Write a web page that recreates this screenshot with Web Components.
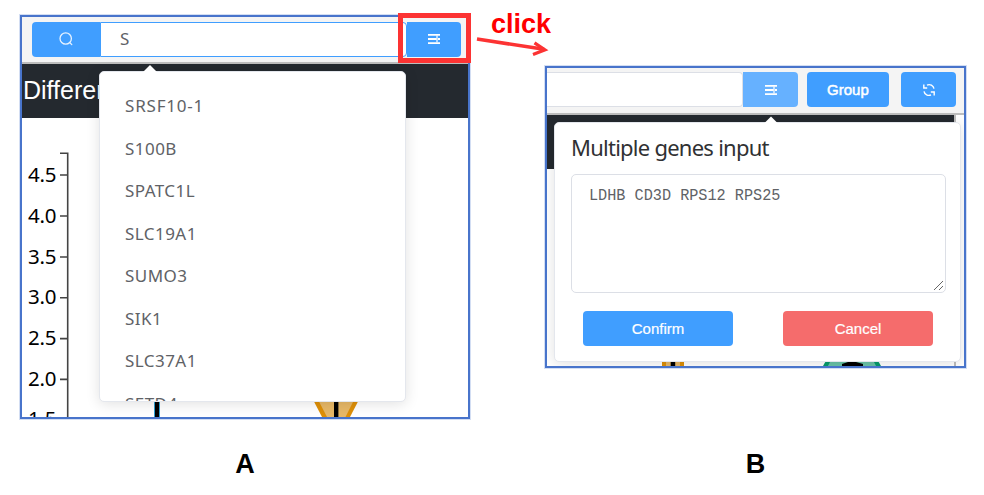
<!DOCTYPE html>
<html lang="en"><head><meta charset="utf-8"><title>Gene search</title>
<style>
html,body{margin:0;background:#fff;width:984px;height:495px;overflow:hidden;font-family:"Liberation Sans",Arial,sans-serif}
</style></head><body><gene-figure></gene-figure>
<script>
function define(name, markup){
  const t=document.createElement('template'); t.innerHTML=markup;
  customElements.define(name,class extends HTMLElement{
    constructor(){super();this.attachShadow({mode:'open'}).append(t.content.cloneNode(true));}
  });
}
define('ui-button',`<style>
:host{display:flex;align-items:center;justify-content:center;box-sizing:border-box;width:54.5px;height:35px;flex:none;background:var(--c,#409eff);border-radius:var(--r,4px);color:#fff;font:15px "Liberation Sans",Arial,sans-serif;-webkit-text-stroke:var(--s,.3px) #fff}
</style><slot></slot>`);
define('icon-search',`<style>:host{display:block;width:16px;height:16px}svg{display:block}</style>
<svg width="16" height="16" fill="none" stroke="#e6f2ff" stroke-width="1.3" stroke-linecap="round"><circle cx="7.7" cy="7.5" r="5.7"/><path d="M11.7 11.5l2.1 2.1"/></svg>`);
define('icon-options',`<style>:host{display:block;width:14px;height:12px}svg{display:block}</style>
<svg width="14" height="12" fill="#fff"><path d="M1 1h12v1.7H1zM1 5h8.6v1.9H1zM11 5h2v1.9h-2zM1 9.200h12v1.900H1z"/><path d="M9.200 2.400h1.600v6.900H9.200z" opacity=".75"/></svg>`);
define('icon-refresh',`<style>:host{display:block;width:14px;height:14px}svg{display:block}</style>
<svg width="14" height="14" fill="none" stroke="#fff" stroke-width="1.4"><path d="M1.800 1.500V5H5.200M2 8.300A5 5 0 0 0 9 11.900M12.200 12.500V9H8.800M12 5.700A5 5 0 0 0 5 2.100"/></svg>`);
define('app-frame',`<style>
:host{display:block;position:relative;box-sizing:border-box;border:2px solid #4874cb;box-shadow:0 0 0 1px #d3def3;background:#fff}
.view{height:100%;overflow:hidden;position:relative;display:flex;flex-direction:column}
.bar{display:flex;box-sizing:border-box;height:var(--bar,47px);flex:none;background:#f4f4f4;border-bottom:2px solid #bdbdbd;padding:var(--pad)}
</style><div class="view"><div class="bar"><slot name="bar"></slot></div><slot></slot></div>`);
define('title-strip',`<style>:host{display:block;box-sizing:border-box;height:54px;flex:none;background:#24292f;color:#fff;font:25px/53px "Liberation Sans",Arial,sans-serif;padding-left:1px;white-space:nowrap}</style><slot></slot>`);
define('text-field',`<style>:host{display:block;box-sizing:border-box;height:35px;background:#fff;border:1px solid var(--b,#dcdfe6);color:#606266;font:17px/31px "Noto Sans",sans-serif;padding-left:19px;border-radius:0 4px 4px 0}</style><slot></slot>`);
define('pop-card',`<style>
:host{display:block;position:absolute;box-sizing:border-box;background:#fff;border:1px solid #e4e7ed;border-radius:5px;box-shadow:0 2px 14px rgba(0,0,0,.12)}
.tip{position:absolute;left:var(--tip);top:-7px;width:14px;height:7px;background:#fff;clip-path:polygon(50% 0,100% 100%,0 100%)}
.body{overflow:hidden;height:100%}
</style><div class="tip"></div><div class="body"><slot></slot></div>`);
define('gene-option',`<style>:host{display:block;height:42.5px;padding-left:25px;font:17px/42.5px "Noto Sans",sans-serif;letter-spacing:var(--ls,.45px);color:#606266}</style><slot></slot>`);
define('violin-plot',`<style>:host{display:block;height:299px;flex:none}svg{display:block}text{font:20.5px "Noto Sans",sans-serif;fill:#000}</style>
<svg width="446" height="299" viewBox="22 118 446 299">
<path d="M60 153.2H67.7V417M60 175h8M60 216h8M60 257h8M60 297.8h8M60 338.6h8M60 379.4h8" fill="none" stroke="#444" stroke-width="1.6"/>
<g text-anchor="start"><text x="28" y="182" textLength="28.5">4.5</text><text x="28" y="222.500" textLength="28.5">4.0</text><text x="28" y="263.5" textLength="28.5">3.5</text><text x="28" y="304.3" textLength="28.5">3.0</text><text x="28" y="345" textLength="28.5">2.5</text><text x="28" y="386" textLength="28.5">2.0</text><text x="28" y="426" textLength="28.5">1.5</text></g>
<path d="M154 390h6v27h-6z" fill="#2f9fd0"/><path d="M155 390h4v27h-4z"/>
<path d="M308 390H364L350 417H322z" fill="#de8f07"/><path d="M313 390H359L345.500 417H327z" fill="#e7b867"/><path d="M334 390h4v27h-4z"/><path d="M338 390h1v27h-1z" fill="#8b703f"/>
</svg>`);
define('plot-tail',`<style>:host{display:block;height:197px;flex:none}svg{display:block}</style>
<svg width="417" height="197" viewBox="547 169 417 197">
<path d="M954 169h2v197h-2z" fill="#bdbdbd"/>
<path d="M662 350h22v16h-22z" fill="#de8f07"/><path d="M666 350h14v16h-14z" fill="#e7b867"/><path d="M670.700 350h4.500v16h-4.500z"/>
<path d="M827 359H877L881 366H823z" fill="#059b6c"/><path d="M830 362H874L876 366H828z" fill="#69c3a7"/><path d="M848 362h8l7 2v2h-21v-2z"/>
</svg>`);
define('gene-form',`<style>
:host{display:flex;flex-direction:column;padding:9px 15px 0 16px}
h2{margin:0;font:22px/30px "Noto Sans",sans-serif;color:#303133;letter-spacing:-.75px;white-space:nowrap;height:30px}
.area{box-sizing:border-box;width:375px;height:119px;margin-top:11.5px;border:1px solid #dcdfe6;border-radius:5px;padding:11px 18px 9px;font:15.2px/20px "Liberation Mono",monospace;color:#606266;display:flex;justify-content:space-between}
.area span{display:block;height:20px;transform:scaleY(1.13);transform-origin:50% 70%;margin-left:-1px}
.area svg{align-self:flex-end;margin:0 -17px -8px 0;flex:none}
.actions{display:flex;gap:50px;padding:18px 0 0 12px}
ui-button{width:150px;--s:.2px}
</style><h2>Multiple genes input</h2>
<div class="area"><span>LDHB CD3D RPS12 RPS25</span><svg width="11" height="11" stroke="#666" stroke-width="1"><path d="M1 10L10 1M6 10l4-4"/></svg></div>
<div class="actions"><ui-button>Confirm</ui-button><ui-button style="--c:#f56c6c">Cancel</ui-button></div>`);
define('figure-caption',`<style>:host{display:block;font:bold 27px/30px "Liberation Sans",Arial,sans-serif;color:#000;text-align:center}</style><slot></slot>`);
define('gene-figure',`<style>
:host{display:block;position:relative;width:984px;height:495px;background:#fff}
.row{display:flex;align-items:flex-start;gap:75px;padding:15px 0 0 20px;height:433px;box-sizing:border-box}
.a{width:450px;height:404px;--bar:47px;--pad:4.5px 7px 0 10px}
.b{width:421px;height:302px;margin-top:51px;--bar:47px;--pad:4.4px 8px 0 0}
.a text-field{flex:1;--b:#409eff}
.b text-field{width:196.4px;border-left:0}
.menu{left:77px;top:54px;width:307px;height:331px;--tip:43px}
.dialog{left:7px;top:54.4px;width:407px;height:240px;--tip:209px}
.options{padding-top:13px}
.captions{display:grid;grid-template-columns:450px 421px;gap:75px;padding:16px 0 0 20px}
.marks{position:absolute;left:0;top:0;pointer-events:none}
.click{position:absolute;left:491px;top:9px;font:bold 27px/30px "Liberation Sans",Arial,sans-serif;color:#f00}
.b title-strip{margin-right:8px;border-right:2px solid #bdbdbd}
</style>
<div class="row">
<app-frame class="a">
 <ui-button slot="bar" style="width:68px;--r:4px 0 0 4px"><icon-search></icon-search></ui-button><text-field slot="bar">S</text-field><ui-button slot="bar" style="--r:0 4px 4px 0"><icon-options></icon-options></ui-button>
 <title-strip>Differen</title-strip><violin-plot></violin-plot>
 <pop-card class="menu"><div class="options"><gene-option style="--ls:.8px">SRSF10-1</gene-option><gene-option>S100B</gene-option><gene-option>SPATC1L</gene-option><gene-option>SLC19A1</gene-option><gene-option>SUMO3</gene-option><gene-option>SIK1</gene-option><gene-option>SLC37A1</gene-option><gene-option>SETD4</gene-option></div></pop-card>
</app-frame>
<app-frame class="b">
 <text-field slot="bar"></text-field><ui-button slot="bar" style="--c:#66b1ff;--r:0 4px 4px 0"><icon-options></icon-options></ui-button><ui-button slot="bar" style="width:82px;margin:0 12.4px 0 9px;--s:.5px">Group</ui-button><ui-button slot="bar"><icon-refresh></icon-refresh></ui-button>
 <title-strip></title-strip><plot-tail></plot-tail>
 <pop-card class="dialog"><gene-form></gene-form></pop-card>
</app-frame>
</div>
<div class="captions"><figure-caption>A</figure-caption><figure-caption>B</figure-caption></div>
<svg class="marks" width="984" height="495" fill="none" stroke="#fc3333"><path d="M400.500 15.500h68v45h-68z" stroke-width="5"/><path d="M477 39L544 49.300" stroke-width="3.6"/><path d="M534.500 42.800L545 49.800L533 54.500" stroke-width="3.2"/></svg>
<div class="click">click</div>`);
</script></body></html>
